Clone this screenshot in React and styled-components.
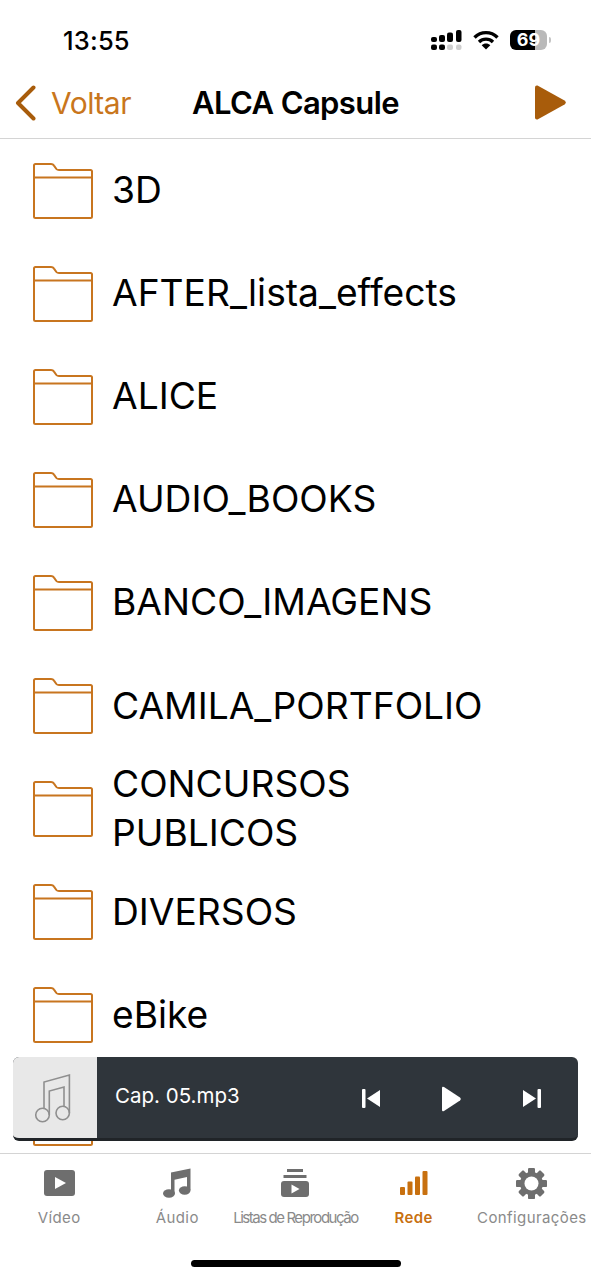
import React from "react";
import styled, { createGlobalStyle } from "styled-components";

const GlobalStyle = createGlobalStyle`
  html, body {
    margin: 0;
    padding: 0;
    background: #fff;
  }
  * {
    box-sizing: border-box;
  }
`;

const Screen = styled.div`
  width: 591px;
  height: 1280px;
  display: flex;
  flex-direction: column;
  overflow: hidden;
  background: #fff;
  color: #000;
  font-family: Inter, "Liberation Sans", sans-serif;
  position: relative;
`;

const StatusBar = styled.div`
  height: 76px;
  flex: none;
  display: flex;
  align-items: center;
  padding: 4px 44px 0 63px;
`;
const Clock = styled.div`
  font-size: 25.5px;
  font-weight: 500;
  letter-spacing: 0.2px;
  flex: 1;
`;
const StatusIcons = styled.div`
  display: flex;
  align-items: center;
  gap: 11px;
`;
const Battery = styled.div`
  width: 37px;
  height: 20px;
  border-radius: 6px;
  background: linear-gradient(90deg, #000 0 67%, #b9b9b9 67% 100%);
  color: #fff;
  font-size: 18px;
  font-weight: 700;
  line-height: 20px;
  text-align: center;
  position: relative;

  &::after {
    content: "";
    position: absolute;
    right: -4px;
    top: 7px;
    width: 2px;
    height: 6px;
    border-radius: 0 2px 2px 0;
    background: #c4c4c4;
  }
`;

const NavBar = styled.div`
  height: 63px;
  flex: none;
  display: grid;
  grid-template-columns: 177px 1fr auto;
  align-items: center;
  padding: 0 25px 9px 15px;
  border-bottom: 1px solid #d4d4d4;
`;
const BackLink = styled.div`
  display: flex;
  align-items: center;
  gap: 15px;
  color: #c9761c;
  font-size: 30px;
  letter-spacing: -0.5px;
`;
const Title = styled.div`
  font-size: 31px;
  font-weight: 600;
  letter-spacing: -0.6px;
`;

const Main = styled.div`
  flex: 1;
  min-height: 0;
  position: relative;
  overflow: hidden;
`;
const Row = styled.div`
  height: 103.1px;
  display: flex;
  align-items: center;
  gap: 19px;
  padding-left: 33px;
`;
const RowName = styled.div`
  max-width: 400px;
  padding-bottom: 2px;
  font-size: 37.2px;
  line-height: 49px;
`;

const Player = styled.div`
  position: absolute;
  left: 13px;
  right: 13px;
  bottom: 12px;
  height: 84px;
  display: flex;
  align-items: stretch;
  background: #2f353b;
  border-radius: 6px;
  border-bottom: 3px solid #202428;
  overflow: hidden;
`;
const Thumb = styled.div`
  width: 84px;
  flex: none;
  display: flex;
  align-items: center;
  justify-content: center;
  padding-right: 6px;
  background: #e8e8e8;
`;
const TrackName = styled.div`
  flex: 1;
  padding: 0 0 4px 18px;
  align-self: center;
  color: #fff;
  font-size: 20.5px;
`;
const Controls = styled.div`
  display: flex;
  align-items: center;
  gap: 62px;
  padding: 2px 37px 0 0;
`;

const TabBar = styled.div`
  height: 127px;
  flex: none;
  display: grid;
  grid-template-columns: repeat(5, minmax(0, 1fr));
  border-top: 1px solid #d4d4d4;
`;
const Tab = styled.div`
  display: flex;
  flex-direction: column;
  align-items: center;
  padding-top: 13px;
  color: ${(p) => (p.$active ? "#c8700f" : "#8a8a8a")};
`;
const TabIcon = styled.div`
  height: 32px;
  display: flex;
  align-items: center;
  justify-content: center;
`;
const TabLabel = styled.div`
  margin-top: 9px;
  font-size: 15px;
  line-height: 20px;
  white-space: nowrap;
  font-weight: ${(p) => (p.$active ? 600 : 400)};
  letter-spacing: ${(p) => p.$spacing || "0.4px"};
`;
const HomeBar = styled.div`
  position: absolute;
  left: 191px;
  bottom: 13px;
  width: 210px;
  height: 7px;
  border-radius: 4px;
  background: #000;
`;

const folders = [
  "3D",
  "AFTER_lista_effects",
  "ALICE",
  "AUDIO_BOOKS",
  "BANCO_IMAGENS",
  "CAMILA_PORTFOLIO",
  "CONCURSOS PUBLICOS",
  "DIVERSOS",
  "eBike",
  "",
];

const FolderIcon = () => (
  <svg width="60" height="56" viewBox="0 0 60 56" fill="none" stroke="#c8751f" strokeWidth="2">
    <path d="M1 14V2.500Q1 1 2.500 1H18Q20 1 21 2.600L23.400 6Q24.200 7 26 7H57.500Q59 7 59 8.500V53.500Q59 55 57.500 55H2.500Q1 55 1 53.500Z" strokeLinejoin="round" />
    <path d="M1 14.500H59" />
  </svg>
);

const SignalIcon = () => (
  <svg width="31" height="20" viewBox="0 0 31 20" fill="#000">
    <rect x="0" y="7" width="6" height="5" rx="2" />
    <rect x="8" y="5" width="6" height="7" rx="2" />
    <rect x="16" y="2.500" width="6" height="9.500" rx="2" />
    <rect x="25" y="0" width="5.500" height="12" rx="2" />
    <rect x="0" y="14.500" width="6" height="5.500" rx="2" />
    <rect x="8" y="14.500" width="6" height="5.500" rx="2" />
    <rect x="16" y="14.500" width="6" height="5.500" rx="2" fill="#cfcfcf" />
    <rect x="25" y="14.500" width="5.500" height="5.500" rx="2" fill="#cfcfcf" />
  </svg>
);

const WifiIcon = () => (
  <svg width="26" height="20" viewBox="0 0 26 20" fill="none" stroke="#000" strokeWidth="3.400">
    <path d="M1.500 7.500C8 1 18 1 24.500 7.500" />
    <path d="M6 12C10 8.200 16 8.200 20 12" />
    <path d="M13 19.500L8.700 15.200C11 13 15 13 17.300 15.200Z" fill="#000" stroke="none" />
  </svg>
);

const NoteOutline = () => (
  <svg width="38" height="50" viewBox="0 0 38 50" fill="none" stroke="#8f8f8f" strokeWidth="1.600">
    <path d="M11 35.500V9L36.400 2V40" />
    <path d="M16.300 42V18L31 14V33.500" />
    <circle cx="9.500" cy="42" r="6.800" />
    <circle cx="29.700" cy="40" r="6.700" />
  </svg>
);

const VideoIcon = () => (
  <svg width="31" height="26" viewBox="0 0 31 26">
    <rect width="31" height="26" rx="3" fill="#6e6e6e" />
    <path d="M11 7L22 13L11 19Z" fill="#fff" />
  </svg>
);

const MusicIcon = () => (
  <svg width="28" height="30" viewBox="0 0 28 30" fill="#6e6e6e">
    <path d="M8 4.500L27.500 0.500V22H24V9L11.500 11.800V25H8Z" />
    <ellipse cx="6" cy="25.500" rx="6" ry="4.200" />
    <ellipse cx="21.700" cy="22.500" rx="5.800" ry="4.200" />
  </svg>
);

const PlaylistIcon = () => (
  <svg width="28" height="28" viewBox="0 0 28 28" fill="#6e6e6e">
    <rect x="6" y="0" width="16" height="3" />
    <rect x="2.500" y="6" width="23" height="3" />
    <rect x="0" y="12" width="28" height="16" rx="3" />
    <path d="M10.500 15.500L18.500 20L10.500 24.500Z" fill="#fff" />
  </svg>
);

const SignalTabIcon = () => (
  <svg width="28" height="24" viewBox="0 0 28 24" fill="#c8700f">
    <rect x="0" y="16" width="5" height="8" rx="1" />
    <rect x="7.500" y="10.500" width="5" height="13.500" rx="1" />
    <rect x="15" y="5.500" width="5" height="18.500" rx="1" />
    <rect x="22.500" y="0" width="5" height="24" rx="1" />
  </svg>
);

const GearIcon = () => {
  const teeth = [0, 45, 90, 135, 180, 225, 270, 315];
  return (
    <svg width="31" height="31" viewBox="0 0 31 31" fill="#6e6e6e">
      {teeth.map((a) => (
        <rect key={a} x="12" y="0" width="7" height="31" rx="1.500" transform={`rotate(${a} 15.500 15.500)`} />
      ))}
      <circle cx="15.500" cy="15.500" r="11.500" />
      <circle cx="15.500" cy="15.500" r="7" fill="#fff" />
    </svg>
  );
};

const tabs = [
  { label: "Vídeo", icon: <VideoIcon /> },
  { label: "Áudio", icon: <MusicIcon /> },
  { label: "Listas de Reprodução", icon: <PlaylistIcon />, spacing: "-1.45px" },
  { label: "Rede", icon: <SignalTabIcon />, active: true },
  { label: "Configurações", icon: <GearIcon /> },
];

const App = () => {
  return (
    <Screen>
      <GlobalStyle />
      <StatusBar>
        <Clock>13:55</Clock>
        <StatusIcons>
          <SignalIcon />
          <WifiIcon />
          <Battery>69</Battery>
        </StatusIcons>
      </StatusBar>
      <NavBar>
        <BackLink>
          <svg width="21" height="36" viewBox="0 0 21 36" fill="none" stroke="#a85c0b" strokeWidth="4" strokeLinecap="round" strokeLinejoin="round">
            <path d="M18.500 2.500L3 18L18.500 33.500" />
          </svg>
          Voltar
        </BackLink>
        <Title>ALCA Capsule</Title>
        <svg width="31" height="35" viewBox="0 0 31 35" fill="#a85c0b">
          <path d="M2.500 0.500L29.500 15.500Q32 17.500 29.500 19.500L2.500 34.500Q0 35 0 32.500V2.500Q0 0 2.500 0.500Z" />
        </svg>
      </NavBar>
      <Main>
        {folders.map((name, i) => (
          <Row key={i}>
            <FolderIcon />
            {name && <RowName>{name}</RowName>}
          </Row>
        ))}
        <Player>
          <Thumb>
            <NoteOutline />
          </Thumb>
          <TrackName>Cap. 05.mp3</TrackName>
          <Controls>
            <svg width="18" height="19" viewBox="0 0 18 19" fill="#fff">
              <rect x="0" y="0" width="3.500" height="19" rx="1" />
              <path d="M18 1V18L5 9.500Z" />
            </svg>
            <svg width="19" height="26" viewBox="0 0 19 26" fill="#fff">
              <path d="M0 2Q0 0 2 1L18 11.500Q19.500 13 18 14.500L2 25Q0 26 0 24Z" />
            </svg>
            <svg width="18" height="19" viewBox="0 0 18 19" fill="#fff">
              <path d="M0 1V18L13 9.500Z" />
              <rect x="14.500" y="0" width="3.500" height="19" rx="1" />
            </svg>
          </Controls>
        </Player>
      </Main>
      <TabBar>
        {tabs.map((t) => (
          <Tab key={t.label} $active={t.active}>
            <TabIcon>{t.icon}</TabIcon>
            <TabLabel $active={t.active} $spacing={t.spacing}>
              {t.label}
            </TabLabel>
          </Tab>
        ))}
      </TabBar>
      <HomeBar />
    </Screen>
  );
};

export default App;
